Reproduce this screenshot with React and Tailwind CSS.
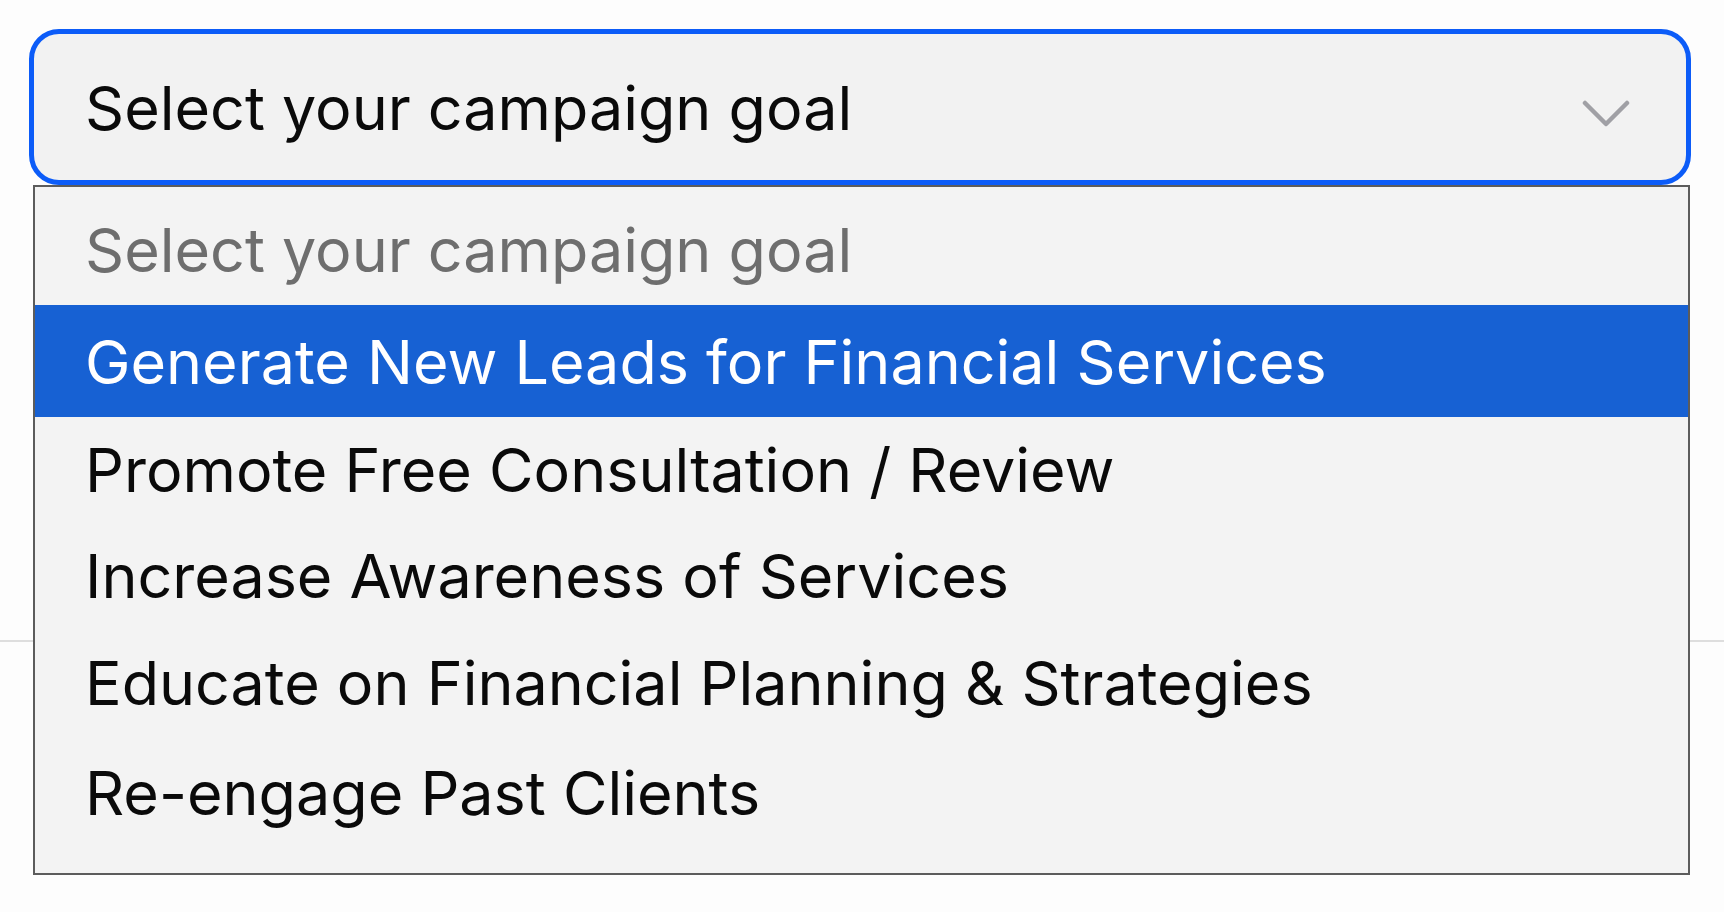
import React from "react";

const options = [
  "Promote Free Consultation / Review",
  "Increase Awareness of Services",
  "Educate on Financial Planning & Strategies",
  "Re-engage Past Clients",
];

export default function App() {
  return (
    <div
      className="relative w-full h-[912px] overflow-hidden bg-[#fdfdfd]"
      style={{ fontFamily: "Inter, 'Liberation Sans', Arial, sans-serif" }}
    >
      <div className="pt-[29px] pl-[29px] pr-[33px]">
        <div className="flex h-[156px] items-center justify-between rounded-[30px] border-[5px] border-[#0c5cf8] bg-[#f2f2f2] pl-[51px] pr-[56px]">
          <span className="text-[61px] leading-none text-[#0a0a0a] pt-[2px]">
            Select your campaign goal
          </span>
          <svg width="48" height="30" viewBox="0 0 48 30" className="mt-[14px]">
            <polyline
              points="3,4 24,25 45,4"
              fill="none"
              stroke="#a0a0a5"
              strokeWidth="4.5"
              strokeLinecap="round"
              strokeLinejoin="round"
            />
          </svg>
        </div>
      </div>
      <div className="mt-[455px] h-[2px] w-full bg-[#dedede]" />

      <div className="absolute left-[33px] top-[185px] h-[690px] w-[1657px] overflow-hidden border-2 border-[#5c5c5c] bg-[#f3f3f3]">
        <div className="flex h-[118px] items-center pl-[50px] pt-[8px] text-[61px] leading-none text-[#6e6e6e]">
          Select your campaign goal
        </div>
        <div className="flex h-[112px] items-center bg-[#1761d3] pl-[50px] pt-[2px] text-[61px] leading-none text-white">
          Generate New Leads for Financial Services
        </div>
        <div className="flex h-[106px] items-center pl-[50px] text-[61px] leading-none text-[#0a0a0a]">
          {options[0]}
        </div>
        <div className="flex h-[106px] items-center pl-[50px] text-[61px] leading-none text-[#0a0a0a]">
          {options[1]}
        </div>
        <div className="flex h-[108px] items-center pl-[50px] text-[61px] leading-none text-[#0a0a0a]">
          {options[2]}
        </div>
        <div className="flex h-[112px] items-center pl-[50px] text-[61px] leading-none text-[#0a0a0a]">
          {options[3]}
        </div>
      </div>
    </div>
  );
}
